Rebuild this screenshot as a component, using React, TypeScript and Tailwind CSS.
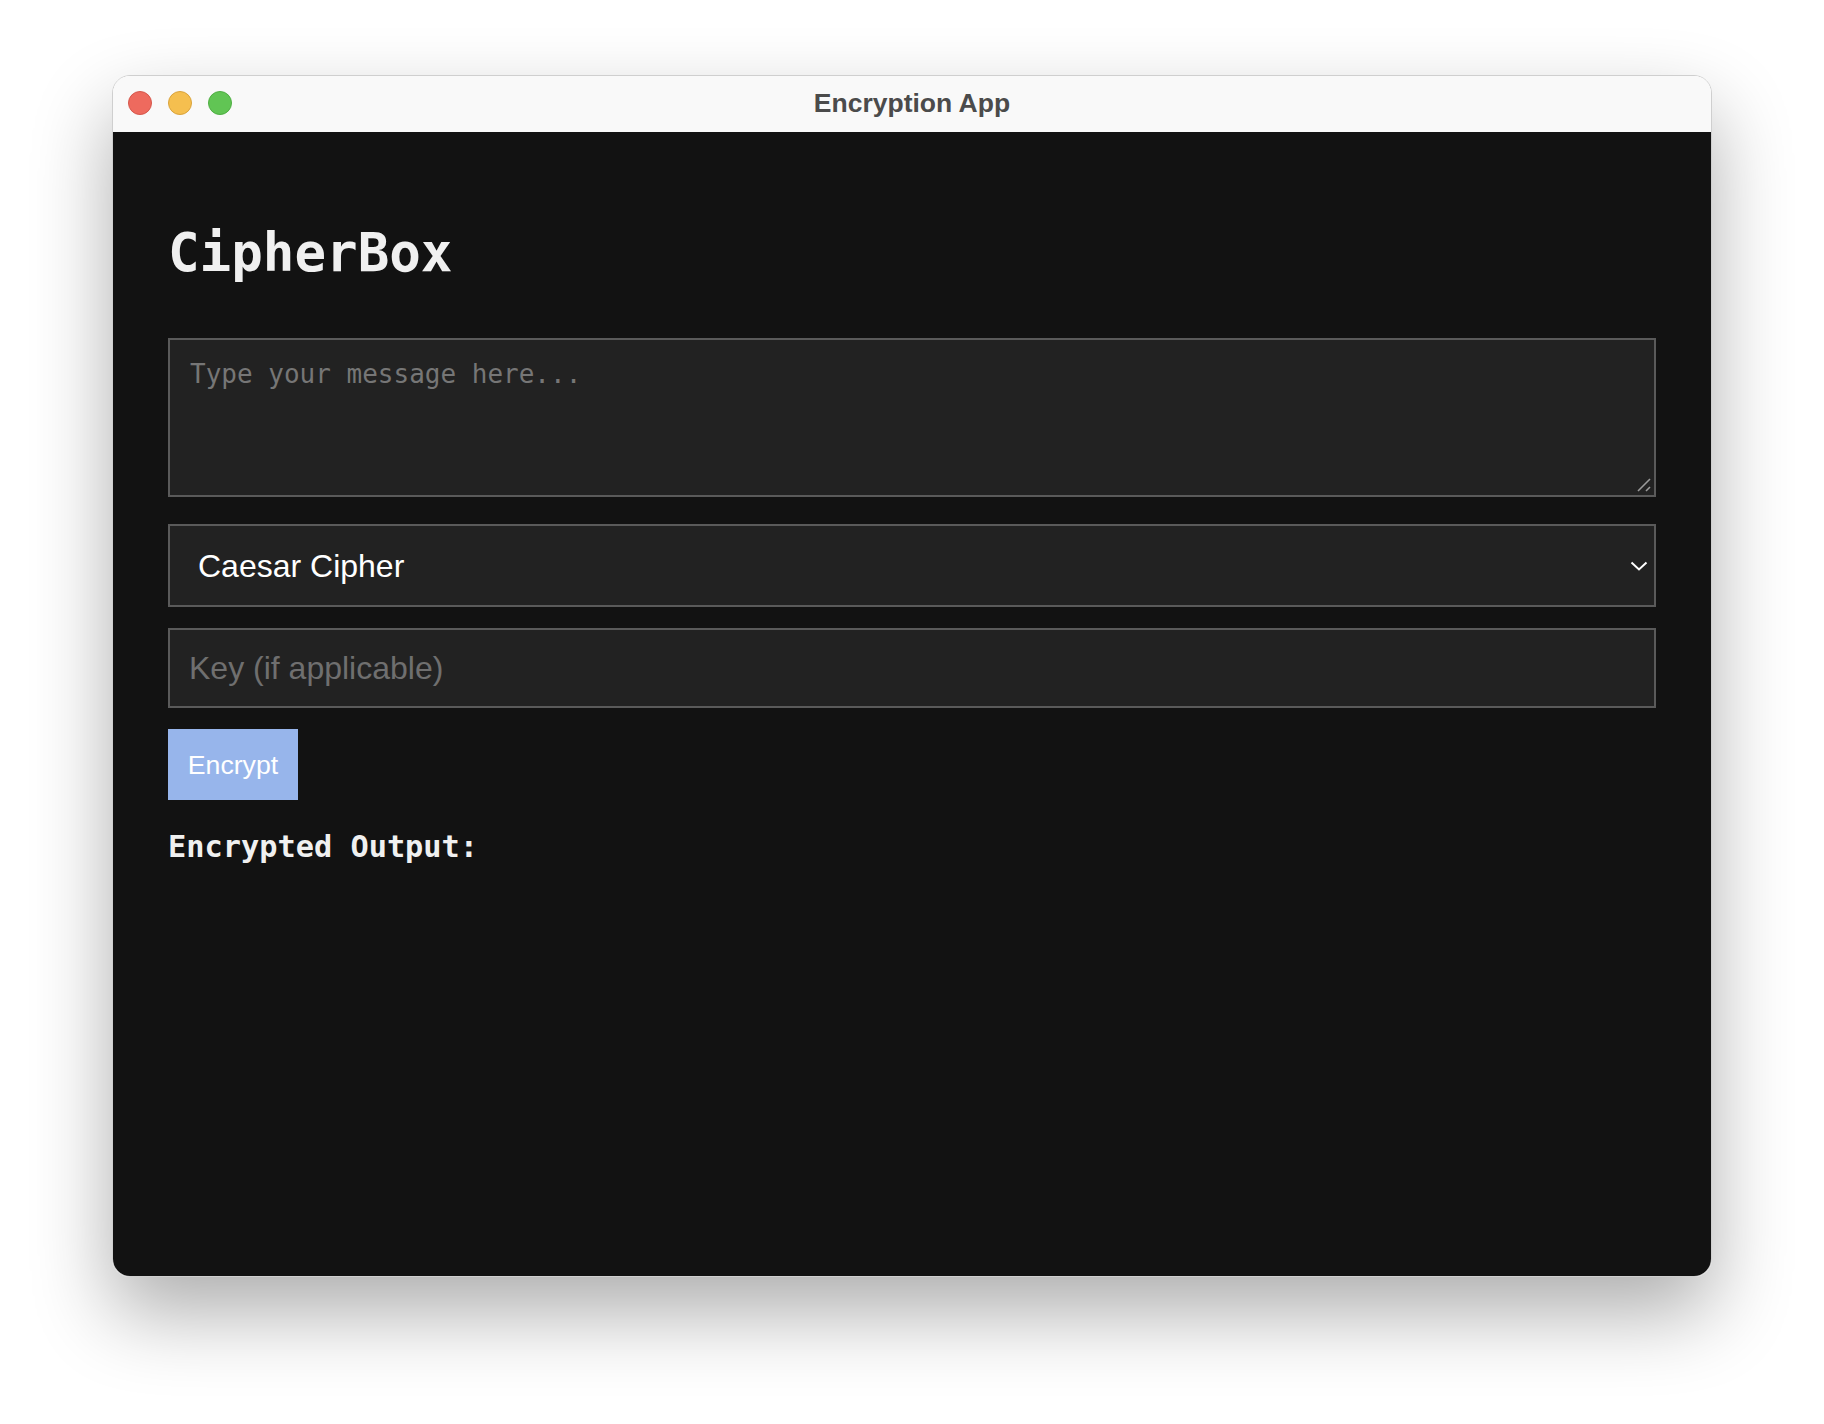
import React from "react";

const mono = { fontFamily: '"DejaVu Sans Mono", "Liberation Mono", monospace' };
const sans = { fontFamily: '"Liberation Sans", Arial, sans-serif' };

export default function App() {
  return (
    <div className="w-[1824px] h-[1424px] bg-white pt-[75px] pl-[112px]">
      <div className="w-[1600px] h-[1202px] rounded-[18px] overflow-hidden flex flex-col border border-[#cfcfcf] shadow-[0_36px_80px_rgba(0,0,0,0.32)]">
        {/* title bar */}
        <div className="relative h-[56px] bg-[#f9f9f9] flex items-center justify-center shrink-0">
          <div className="absolute left-[15px] top-[15px] flex gap-[16px]">
            <span className="w-[24px] h-[24px] rounded-full bg-[#ee6a5e] border border-[#d5574c]" />
            <span className="w-[24px] h-[24px] rounded-full bg-[#f5bf4f] border border-[#d9a33c]" />
            <span className="w-[24px] h-[24px] rounded-full bg-[#61c554] border border-[#4fae43]" />
          </div>
          <span className="text-[26.5px] font-bold text-[#4b4b4b] leading-none -mt-[2px]" style={sans}>
            Encryption App
          </span>
        </div>
        {/* content */}
        <div className="flex-1 bg-[#121212] px-[55px] pt-[94px] flex flex-col">
          <h1 className="text-[52.5px] leading-[54px] font-bold text-[#f0f0f0]" style={mono}>
            CipherBox
          </h1>
          <div className="relative mt-[58px] h-[159px] border-2 border-[#5a5a5a] bg-[#222222] px-[20px] pt-[15px]">
            <span className="text-[26px] text-[#767676]" style={mono}>
              Type your message here...
            </span>
            <svg className="absolute right-[2px] bottom-[2px]" width="16" height="16" viewBox="0 0 16 16">
              <line x1="2" y1="14" x2="14" y2="2" stroke="#9a9a9a" strokeWidth="1.6" />
              <line x1="10" y1="14" x2="14" y2="10" stroke="#9a9a9a" strokeWidth="1.6" />
            </svg>
          </div>
          <div className="mt-[27px] h-[83px] border-2 border-[#5a5a5a] bg-[#222222] pl-[28px] pr-[6px] flex items-center justify-between">
            <span className="text-[32px] text-white" style={sans}>
              Caesar Cipher
            </span>
            <svg width="18" height="12" viewBox="0 0 18 12">
              <polyline points="1.5,2.5 9,9.5 16.5,2.5" fill="none" stroke="#ffffff" strokeWidth="2" />
            </svg>
          </div>
          <div className="mt-[21px] h-[80px] border-2 border-[#5a5a5a] bg-[#222222] pl-[19px] flex items-center">
            <span className="text-[32px] text-[#6f6f6f]" style={sans}>
              Key (if applicable)
            </span>
          </div>
          <div className="mt-[21px]">
            <div className="w-[130px] h-[71px] bg-[#97b5eb] flex items-center justify-center">
              <span className="text-[26.67px] text-white" style={sans}>
                Encrypt
              </span>
            </div>
          </div>
          <h3 className="mt-[32px] text-[30.3px] leading-[30px] font-bold text-[#f0f0f0]" style={mono}>
            Encrypted Output:
          </h3>
        </div>
      </div>
    </div>
  );
}
